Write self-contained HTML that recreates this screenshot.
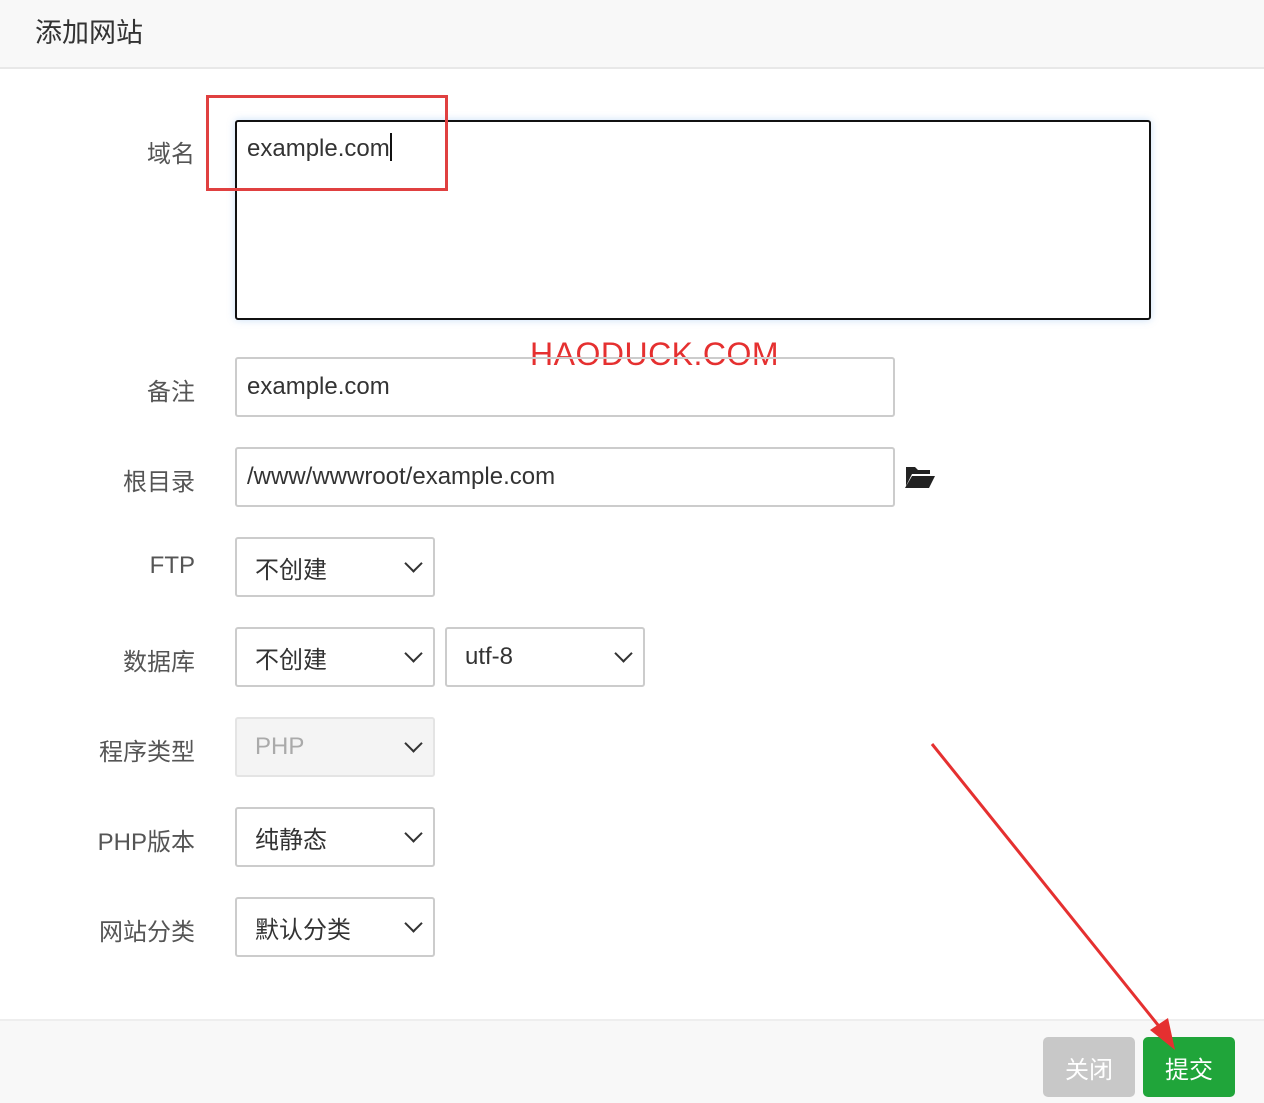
<!DOCTYPE html>
<html><head><meta charset="utf-8"><style>
*{margin:0;padding:0;box-sizing:border-box}
body{width:1264px;height:1103px;background:#fff;position:relative;overflow:hidden;font-family:"Liberation Sans","Noto Sans CJK SC",sans-serif;color:#333}
.hd{position:absolute;left:0;top:0;width:1264px;height:69px;background:#f8f8f8;border-bottom:2px solid #e8e8e8}
.hd span{position:absolute;left:35px;top:11px;font-size:27px;color:#333}
.lbl{position:absolute;right:1069px;font-size:24px;color:#555;text-align:right;white-space:nowrap}
.box{position:absolute;border:2px solid #ccc;border-radius:3px;font-size:24px;color:#333;padding-left:10px;display:flex;align-items:center}
.sel{padding-left:18px}
.sel::after{content:"";position:absolute;right:13px;top:18px;width:11px;height:11px;border-right:2px solid #333;border-bottom:2px solid #333;transform:rotate(45deg)}
.ft{position:absolute;left:0;top:1019px;width:1264px;height:84px;background:#f8f8f8;border-top:2px solid #eee}
.btn{position:absolute;top:1037px;height:60px;border-radius:5px;color:#fff;font-size:24px;display:flex;align-items:center;justify-content:center}
</style></head><body>
<div class="hd"><span>添加网站</span></div>
<div class="lbl" style="top:134px">域名</div>
<div style="position:absolute;left:235px;top:120px;width:916px;height:200px;border:2px solid #111;border-radius:3px;box-shadow:0 0 8px rgba(100,160,230,.35)"></div>
<div style="position:absolute;left:247px;top:133px;font-size:24px;color:#333">example.com<span style="display:inline-block;width:2px;height:28px;background:#111;vertical-align:-5px"></span></div>
<div style="position:absolute;left:206px;top:95px;width:242px;height:96px;border:3px solid #e04040"></div>
<div style="position:absolute;left:530px;top:336px;font-size:32px;color:#e53030;letter-spacing:0.5px">HAODUCK.COM</div>
<div class="lbl" style="top:372px">备注</div>
<div class="box" style="left:235px;top:357px;width:660px;height:60px">example.com</div>
<div class="lbl" style="top:462px">根目录</div>
<div class="box" style="left:235px;top:447px;width:660px;height:60px">/www/wwwroot/example.com</div>
<svg style="position:absolute;left:904px;top:464px" width="32" height="26" viewBox="0 0 32 26"><path d="M2 3h9l3 3h12v4H8L2 22z" fill="#222"/><path d="M8 12h23l-6 12H1z" fill="#222"/></svg>
<div class="lbl" style="top:552px">FTP</div>
<div class="box sel" style="left:235px;top:537px;width:200px;height:60px">不创建</div>
<div class="lbl" style="top:642px">数据库</div>
<div class="box sel" style="left:235px;top:627px;width:200px;height:60px">不创建</div>
<div class="box sel" style="left:445px;top:627px;width:200px;height:60px">utf-8</div>
<div class="lbl" style="top:732px">程序类型</div>
<div class="box sel" style="left:235px;top:717px;width:200px;height:60px;background:#f4f4f4;color:#aaa;border-color:#e4e4e4">PHP</div>
<div class="lbl" style="top:822px">PHP版本</div>
<div class="box sel" style="left:235px;top:807px;width:200px;height:60px">纯静态</div>
<div class="lbl" style="top:912px">网站分类</div>
<div class="box sel" style="left:235px;top:897px;width:200px;height:60px">默认分类</div>
<div class="ft"></div>
<div class="btn" style="left:1043px;width:92px;background:#c8c8c8">关闭</div>
<div class="btn" style="left:1143px;width:92px;background:#20a53a">提交</div>
<svg style="position:absolute;left:0;top:0" width="1264" height="1103"><line x1="932" y1="744" x2="1162" y2="1030" stroke="#e53030" stroke-width="3"/><path d="M1175 1050 L1150 1030 L1168 1018 Z" fill="#e53030"/></svg>
</body></html>
